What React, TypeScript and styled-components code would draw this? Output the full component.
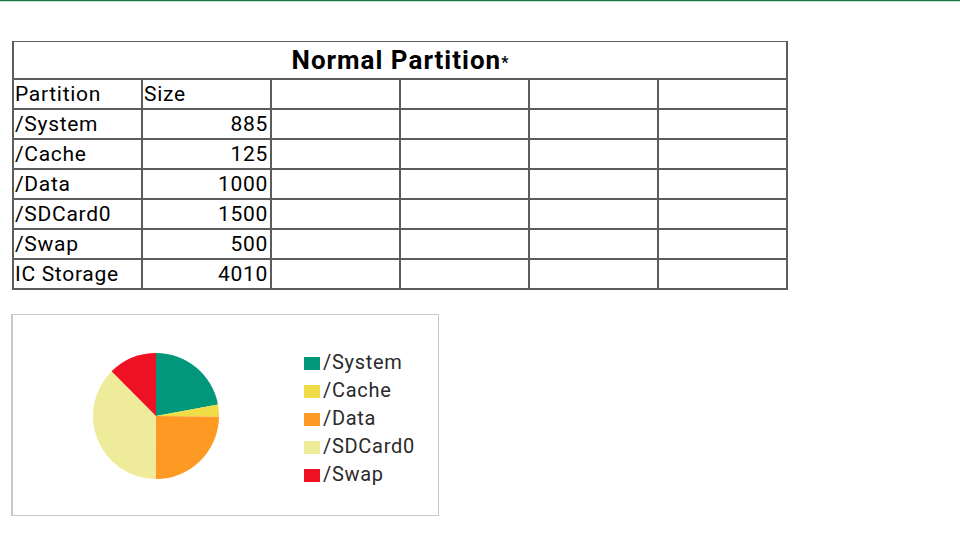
import React from "react";
import styled, { createGlobalStyle } from "styled-components";

const Global = createGlobalStyle`
  html, body { margin: 0; padding: 0; background: #fff; }
  body { font-family: Roboto, "Noto Sans", sans-serif; color: #000; }
`;

const Page = styled.div`
  width: 960px;
  height: 540px;
  display: flex;
  flex-direction: column;
  overflow: hidden;
`;

const TopBar = styled.div`
  height: 1px;
  background: #137a47;
  border-bottom: 1px solid #c9e2d4;
  flex: none;
`;

const Content = styled.div`
  padding: 39px 0 0 12px;
  display: flex;
  flex-direction: column;
  gap: 24px;
`;

const Grid = styled.div`
  width: 776px;
  box-sizing: border-box;
  display: grid;
  grid-template-columns: repeat(6, 127px);
  grid-template-rows: 36px;
  grid-auto-rows: 28px;
  gap: 2px;
  padding: 1px 2px 2px 2px;
  background: #5c5c5c;
`;

const TitleCell = styled.div`
  grid-column: 1 / -1;
  background: #fff;
  display: flex;
  align-items: center;
  justify-content: center;
  font-weight: 700;
  font-size: 26px;
  letter-spacing: 1px;
  line-height: 36px;
`;

const Star = styled.span`
  font-size: 16px;
  margin-top: 6px;
  letter-spacing: 0;
`;

const Cell = styled.div<{ $right?: boolean }>`
  background: #fff;
  font-size: 21px;
  letter-spacing: 0.7px;
  line-height: 28px;
  padding: 0 2px 0 1px;
  text-align: ${(p) => (p.$right ? "right" : "left")};
  white-space: nowrap;
  overflow: hidden;
`;

const ChartBox = styled.div`
  width: 428px;
  height: 202px;
  box-sizing: border-box;
  border: 1px solid #c8c8c8;
  border-left-width: 2px;
  margin-left: -1px;
  display: flex;
  align-items: flex-start;
`;

const PieWrap = styled.svg`
  margin: 37px 0 0 79px;
  flex: none;
`;

const Legend = styled.div`
  margin: 33px 0 0 84px;
  display: flex;
  flex-direction: column;
`;

const LegendRow = styled.div`
  display: flex;
  align-items: center;
  height: 28px;
  font-size: 20px;
  color: #2a2a2a;
  letter-spacing: 0.7px;
`;

const Swatch = styled.span<{ $c: string }>`
  width: 16px;
  height: 13px;
  background: ${(p) => p.$c};
  margin: 2px 3px 0 0;
  flex: none;
`;

const data = [
  { name: "/System", size: 885, color: "#00977a" },
  { name: "/Cache", size: 125, color: "#efdc46" },
  { name: "/Data", size: 1000, color: "#fe9a24" },
  { name: "/SDCard0", size: 1500, color: "#eeec9a" },
  { name: "/Swap", size: 500, color: "#ee1124" },
];

const total = 4010;

function Pie() {
  const r = 63;
  const cx = 64;
  const cy = 64;
  let a = 0;
  const slices = data.map((d) => {
    const sweep = (d.size / total) * Math.PI * 2;
    const a0 = a;
    const a1 = a + sweep;
    a = a1;
    const x0 = cx + r * Math.sin(a0);
    const y0 = cy - r * Math.cos(a0);
    const x1 = cx + r * Math.sin(a1);
    const y1 = cy - r * Math.cos(a1);
    const large = sweep > Math.PI ? 1 : 0;
    return (
      <path
        key={d.name}
        d={`M${cx} ${cy} L${x0} ${y0} A${r} ${r} 0 ${large} 1 ${x1} ${y1} Z`}
        fill={d.color}
      />
    );
  });
  return (
    <PieWrap width="128" height="128" viewBox="0 0 128 128">
      {slices}
    </PieWrap>
  );
}

export default function App() {
  const rows = [
    ...data.map((d) => ({ name: d.name, size: String(d.size) })),
    { name: "IC Storage", size: "4010" },
  ];
  return (
    <Page>
      <Global />
      <TopBar />
      <Content>
        <Grid>
          <TitleCell>
            Normal Partition<Star>*</Star>
          </TitleCell>
          <Cell>Partition</Cell>
          <Cell>Size</Cell>
          <Cell />
          <Cell />
          <Cell />
          <Cell />
          {rows.map((r) => (
            <React.Fragment key={r.name}>
              <Cell>{r.name}</Cell>
              <Cell $right>{r.size}</Cell>
              <Cell />
              <Cell />
              <Cell />
              <Cell />
            </React.Fragment>
          ))}
        </Grid>
        <ChartBox>
          <Pie />
          <Legend>
            {data.map((d) => (
              <LegendRow key={d.name}>
                <Swatch $c={d.color} />
                {d.name}
              </LegendRow>
            ))}
          </Legend>
        </ChartBox>
      </Content>
    </Page>
  );
}
